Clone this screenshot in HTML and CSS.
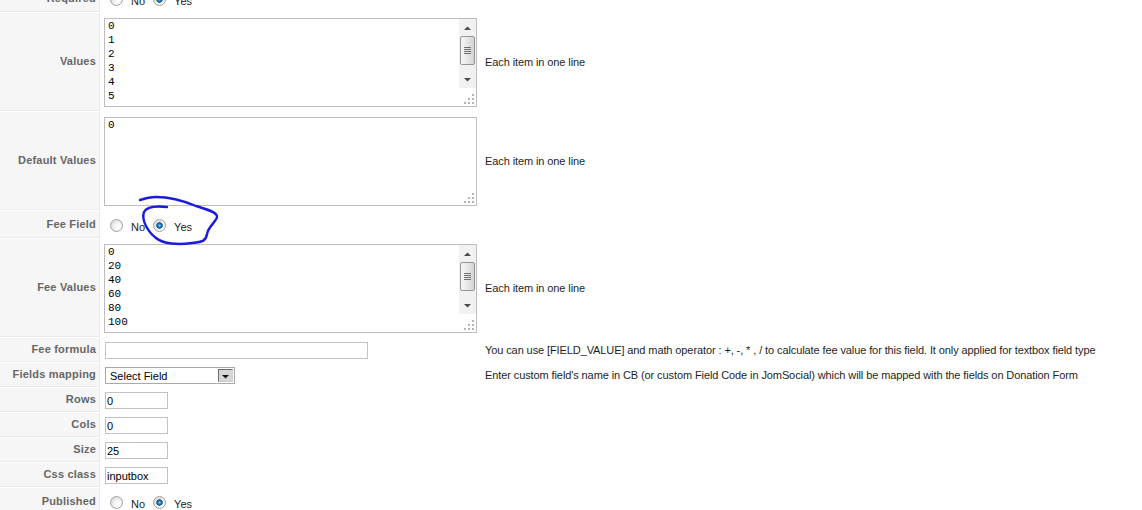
FILE: index.html
```html
<!DOCTYPE html>
<html>
<head>
<meta charset="utf-8">
<title>Field</title>
<link rel="stylesheet" href="styles.css">
</head>
<body>
<div class="page">
  <div class="form">
    <div class="row row-radio">
      <div class="key">Required</div>
      <div class="field field-radio">
        <label class="opt"><input type="radio" class="radio" name="required"><span>No</span></label>
        <label class="opt"><input type="radio" class="radio" name="required" checked><span>Yes</span></label>
      </div>
      <div class="help"></div>
    </div>

    <div class="row row-area">
      <div class="key">Values</div>
      <div class="field field-area">
        <div class="ta">
          <div class="ta-text">0<br>1<br>2<br>3<br>4<br>5</div>
          <div class="sb">
            <div class="sb-btn"><svg width="7" height="4" viewBox="0 0 7 4"><path d="M0 4L3.5 0.5L7 4Z" fill="#4a4a4a"/></svg></div>
            <div class="sb-thumb"><svg width="7" height="8" viewBox="0 0 7 8"><path d="M0 .5h7M0 2.5h7M0 4.5h7M0 6.5h7" stroke="#6f6f6f" stroke-width="1"/></svg></div>
            <div class="sb-track"></div>
            <div class="sb-btn"><svg width="7" height="4" viewBox="0 0 7 4"><path d="M0 0L3.5 3.5L7 0Z" fill="#4a4a4a"/></svg></div>
          </div>
          <svg class="grip" width="10" height="10" viewBox="0 0 10 10"><path d="M8 0h2v2h-2zM4 4h2v2h-2zM8 4h2v2h-2zM0 8h2v2h-2zM4 8h2v2h-2zM8 8h2v2h-2z" fill="#b4b4b4"/></svg>
        </div>
      </div>
      <div class="help">Each item in one line</div>
    </div>

    <div class="row row-area">
      <div class="key">Default Values</div>
      <div class="field field-area">
        <div class="ta">
          <div class="ta-text">0</div>
          <svg class="grip" width="10" height="10" viewBox="0 0 10 10"><path d="M8 0h2v2h-2zM4 4h2v2h-2zM8 4h2v2h-2zM0 8h2v2h-2zM4 8h2v2h-2zM8 8h2v2h-2z" fill="#b4b4b4"/></svg>
        </div>
      </div>
      <div class="help">Each item in one line</div>
    </div>

    <div class="row row-radio">
      <div class="key">Fee Field</div>
      <div class="field field-radio">
        <label class="opt"><input type="radio" class="radio" name="fee"><span>No</span></label>
        <label class="opt"><input type="radio" class="radio" name="fee" checked><span>Yes</span></label>
      </div>
      <div class="help"></div>
    </div>

    <div class="row row-area">
      <div class="key">Fee Values</div>
      <div class="field field-area">
        <div class="ta">
          <div class="ta-text">0<br>20<br>40<br>60<br>80<br>100</div>
          <div class="sb">
            <div class="sb-btn"><svg width="7" height="4" viewBox="0 0 7 4"><path d="M0 4L3.5 0.5L7 4Z" fill="#4a4a4a"/></svg></div>
            <div class="sb-thumb"><svg width="7" height="8" viewBox="0 0 7 8"><path d="M0 .5h7M0 2.5h7M0 4.5h7M0 6.5h7" stroke="#6f6f6f" stroke-width="1"/></svg></div>
            <div class="sb-track"></div>
            <div class="sb-btn"><svg width="7" height="4" viewBox="0 0 7 4"><path d="M0 0L3.5 3.5L7 0Z" fill="#4a4a4a"/></svg></div>
          </div>
          <svg class="grip" width="10" height="10" viewBox="0 0 10 10"><path d="M8 0h2v2h-2zM4 4h2v2h-2zM8 4h2v2h-2zM0 8h2v2h-2zM4 8h2v2h-2zM8 8h2v2h-2z" fill="#b4b4b4"/></svg>
        </div>
      </div>
      <div class="help">Each item in one line</div>
    </div>

    <div class="row row-small">
      <div class="key">Fee formula</div>
      <div class="field field-small"><input type="text" class="input input-wide" value=""></div>
      <div class="help">You can use [FIELD_VALUE] and math operator : +, -, * , / to calculate fee value for this field. It only applied for textbox field type</div>
    </div>

    <div class="row row-small">
      <div class="key">Fields mapping</div>
      <div class="field field-small">
        <div class="select">
          <span class="sel-text">Select Field</span>
          <span class="sel-btn"><svg width="7" height="4" viewBox="0 0 7 4"><path d="M0 0L3.5 3.5L7 0Z" fill="#111"/></svg></span>
        </div>
      </div>
      <div class="help">Enter custom field's name in CB (or custom Field Code in JomSocial) which will be mapped with the fields on Donation Form</div>
    </div>

    <div class="row row-small">
      <div class="key">Rows</div>
      <div class="field field-small"><input type="text" class="input" value="0"></div>
      <div class="help"></div>
    </div>

    <div class="row row-small">
      <div class="key">Cols</div>
      <div class="field field-small"><input type="text" class="input" value="0"></div>
      <div class="help"></div>
    </div>

    <div class="row row-small">
      <div class="key">Size</div>
      <div class="field field-small"><input type="text" class="input" value="25"></div>
      <div class="help"></div>
    </div>

    <div class="row row-small">
      <div class="key">Css class</div>
      <div class="field field-small"><input type="text" class="input" value="inputbox"></div>
      <div class="help"></div>
    </div>

    <div class="row row-radio">
      <div class="key">Published</div>
      <div class="field field-radio">
        <label class="opt"><input type="radio" class="radio" name="published"><span>No</span></label>
        <label class="opt"><input type="radio" class="radio" name="published" checked><span>Yes</span></label>
      </div>
      <div class="help"></div>
    </div>
  </div>

  <svg class="scribble" width="1142" height="510" viewBox="0 0 1142 510">
    <path d="M167,207 C158,206 147,206 144,212 C141,220 148,232 156,238 C163,244 178,245 192,243 C204,242 206,240 207,234 C208,227 216,222 217,217 C218,212 205,209 196,206 C184,201 170,197 156,197 C149,197 143,199 140,200" fill="none" stroke="#1a1ae0" stroke-width="2.4" stroke-linecap="round" stroke-linejoin="round"/>
  </svg>
</div>
</body>
</html>
```

FILE: styles.css
```css
html, body {
  margin: 0;
  padding: 0;
  background: #ffffff;
  overflow: hidden;
}

body {
  font-family: "Liberation Sans", Arial, sans-serif;
  font-size: 11px;
  color: #222;
}

.page {
  position: relative;
  width: 1142px;
  height: 510px;
  overflow: hidden;
}

.form {
  display: flex;
  flex-direction: column;
  gap: 1px;
  margin-top: -15px;
}

.row {
  display: grid;
  grid-template-columns: 100px 380px 1fr;
  column-gap: 1px;
}

.row-radio { height: 27px; }
.row-area { height: 98px; }
.row-small { height: 24px; }

.key {
  box-sizing: border-box;
  background: #f6f6f6;
  border-right: 1px solid #e9e9e9;
  border-bottom: 1px solid #e9e9e9;
  color: #666;
  font-weight: bold;
  font-size: 11px;
  letter-spacing: 0.2px;
  display: flex;
  align-items: center;
  justify-content: flex-end;
  padding-right: 3px;
  padding-bottom: 1px;
  white-space: nowrap;
}

.field {
  display: flex;
  padding-left: 3px;
  box-sizing: border-box;
}

.field-area {
  align-items: flex-start;
  padding-top: 5px;
}

.field-small {
  align-items: flex-start;
  padding-top: 4px;
}

.field-radio {
  align-items: center;
  padding-top: 1px;
  padding-left: 9px;
}

.help {
  display: flex;
  align-items: center;
  padding-left: 3px;
  color: #1e1e1e;
  letter-spacing: -0.1px;
  white-space: nowrap;
}

/* radios */
.opt {
  display: inline-flex;
  align-items: center;
  margin-right: 8px;
  color: #222;
}

.opt span {
  padding-top: 3px;
}

.radio {
  -webkit-appearance: none;
  appearance: none;
  box-sizing: border-box;
  width: 13px;
  height: 13px;
  margin: 0 8px 0 0;
  border-radius: 50%;
  border: 1px solid #a2a2a2;
  background: radial-gradient(circle at 65% 65%, #ffffff 0, #f3f3f3 40%, #cbcbcb 100%);
}

.radio:checked {
  background:
    radial-gradient(circle at 50% 50%, #8bd6f7 0, #2a8bcb 1.4px, #0c4c83 2.9px, rgba(12, 76, 131, 0) 3.5px),
    radial-gradient(circle at 65% 65%, #ffffff 0, #f3f3f3 40%, #cbcbcb 100%);
}

/* textarea look-alike */
.ta {
  position: relative;
  box-sizing: border-box;
  width: 373px;
  height: 89px;
  border: 1px solid #bdbdbd;
  background: #fff;
  display: flex;
}

.ta-text {
  flex: 1;
  overflow: hidden;
  padding: 0 3px;
  font-family: "Liberation Mono", "Courier New", monospace;
  font-size: 11px;
  line-height: 14px;
  color: #000;
}

.sb {
  width: 17px;
  height: 69px;
  background: #f1f1f1;
  display: flex;
  flex-direction: column;
}

.sb-btn {
  height: 17px;
  display: flex;
  align-items: center;
  justify-content: center;
}

.sb-thumb {
  box-sizing: border-box;
  height: 29px;
  margin: 0 1px;
  border: 1px solid #979797;
  border-radius: 2px;
  background: linear-gradient(to right, #f7f7f7, #e3e3e3 60%, #d3d3d3);
  display: flex;
  align-items: center;
  justify-content: center;
}

.sb-track {
  flex: 1;
}

.grip {
  position: absolute;
  right: 2px;
  bottom: 2px;
}

/* inputs */
.input {
  box-sizing: border-box;
  width: 63px;
  height: 17px;
  margin: 0 0 0 1px;
  padding: 0 1px;
  border: 1px solid #c2c2c2;
  font-family: "Liberation Sans", Arial, sans-serif;
  font-size: 11px;
  color: #000;
  background: #fff;
  outline: none;
}

.input-wide {
  width: 263px;
}

.select {
  box-sizing: border-box;
  width: 130px;
  height: 17px;
  margin-left: 1px;
  border: 1px solid #a9a9a9;
  background: #fff;
  display: flex;
  align-items: center;
  justify-content: space-between;
  padding: 0 1px 0 4px;
}

.sel-text {
  color: #000;
  font-size: 11px;
}

.sel-btn {
  box-sizing: border-box;
  width: 15px;
  height: 13px;
  border: 1px solid #6b6b6b;
  border-right-color: #cfcfcf;
  border-bottom-color: #cfcfcf;
  background: #d6d6d6;
  display: flex;
  align-items: center;
  justify-content: center;
  padding-top: 2px;
}

.scribble {
  position: absolute;
  left: 0;
  top: 0;
  pointer-events: none;
}
```
